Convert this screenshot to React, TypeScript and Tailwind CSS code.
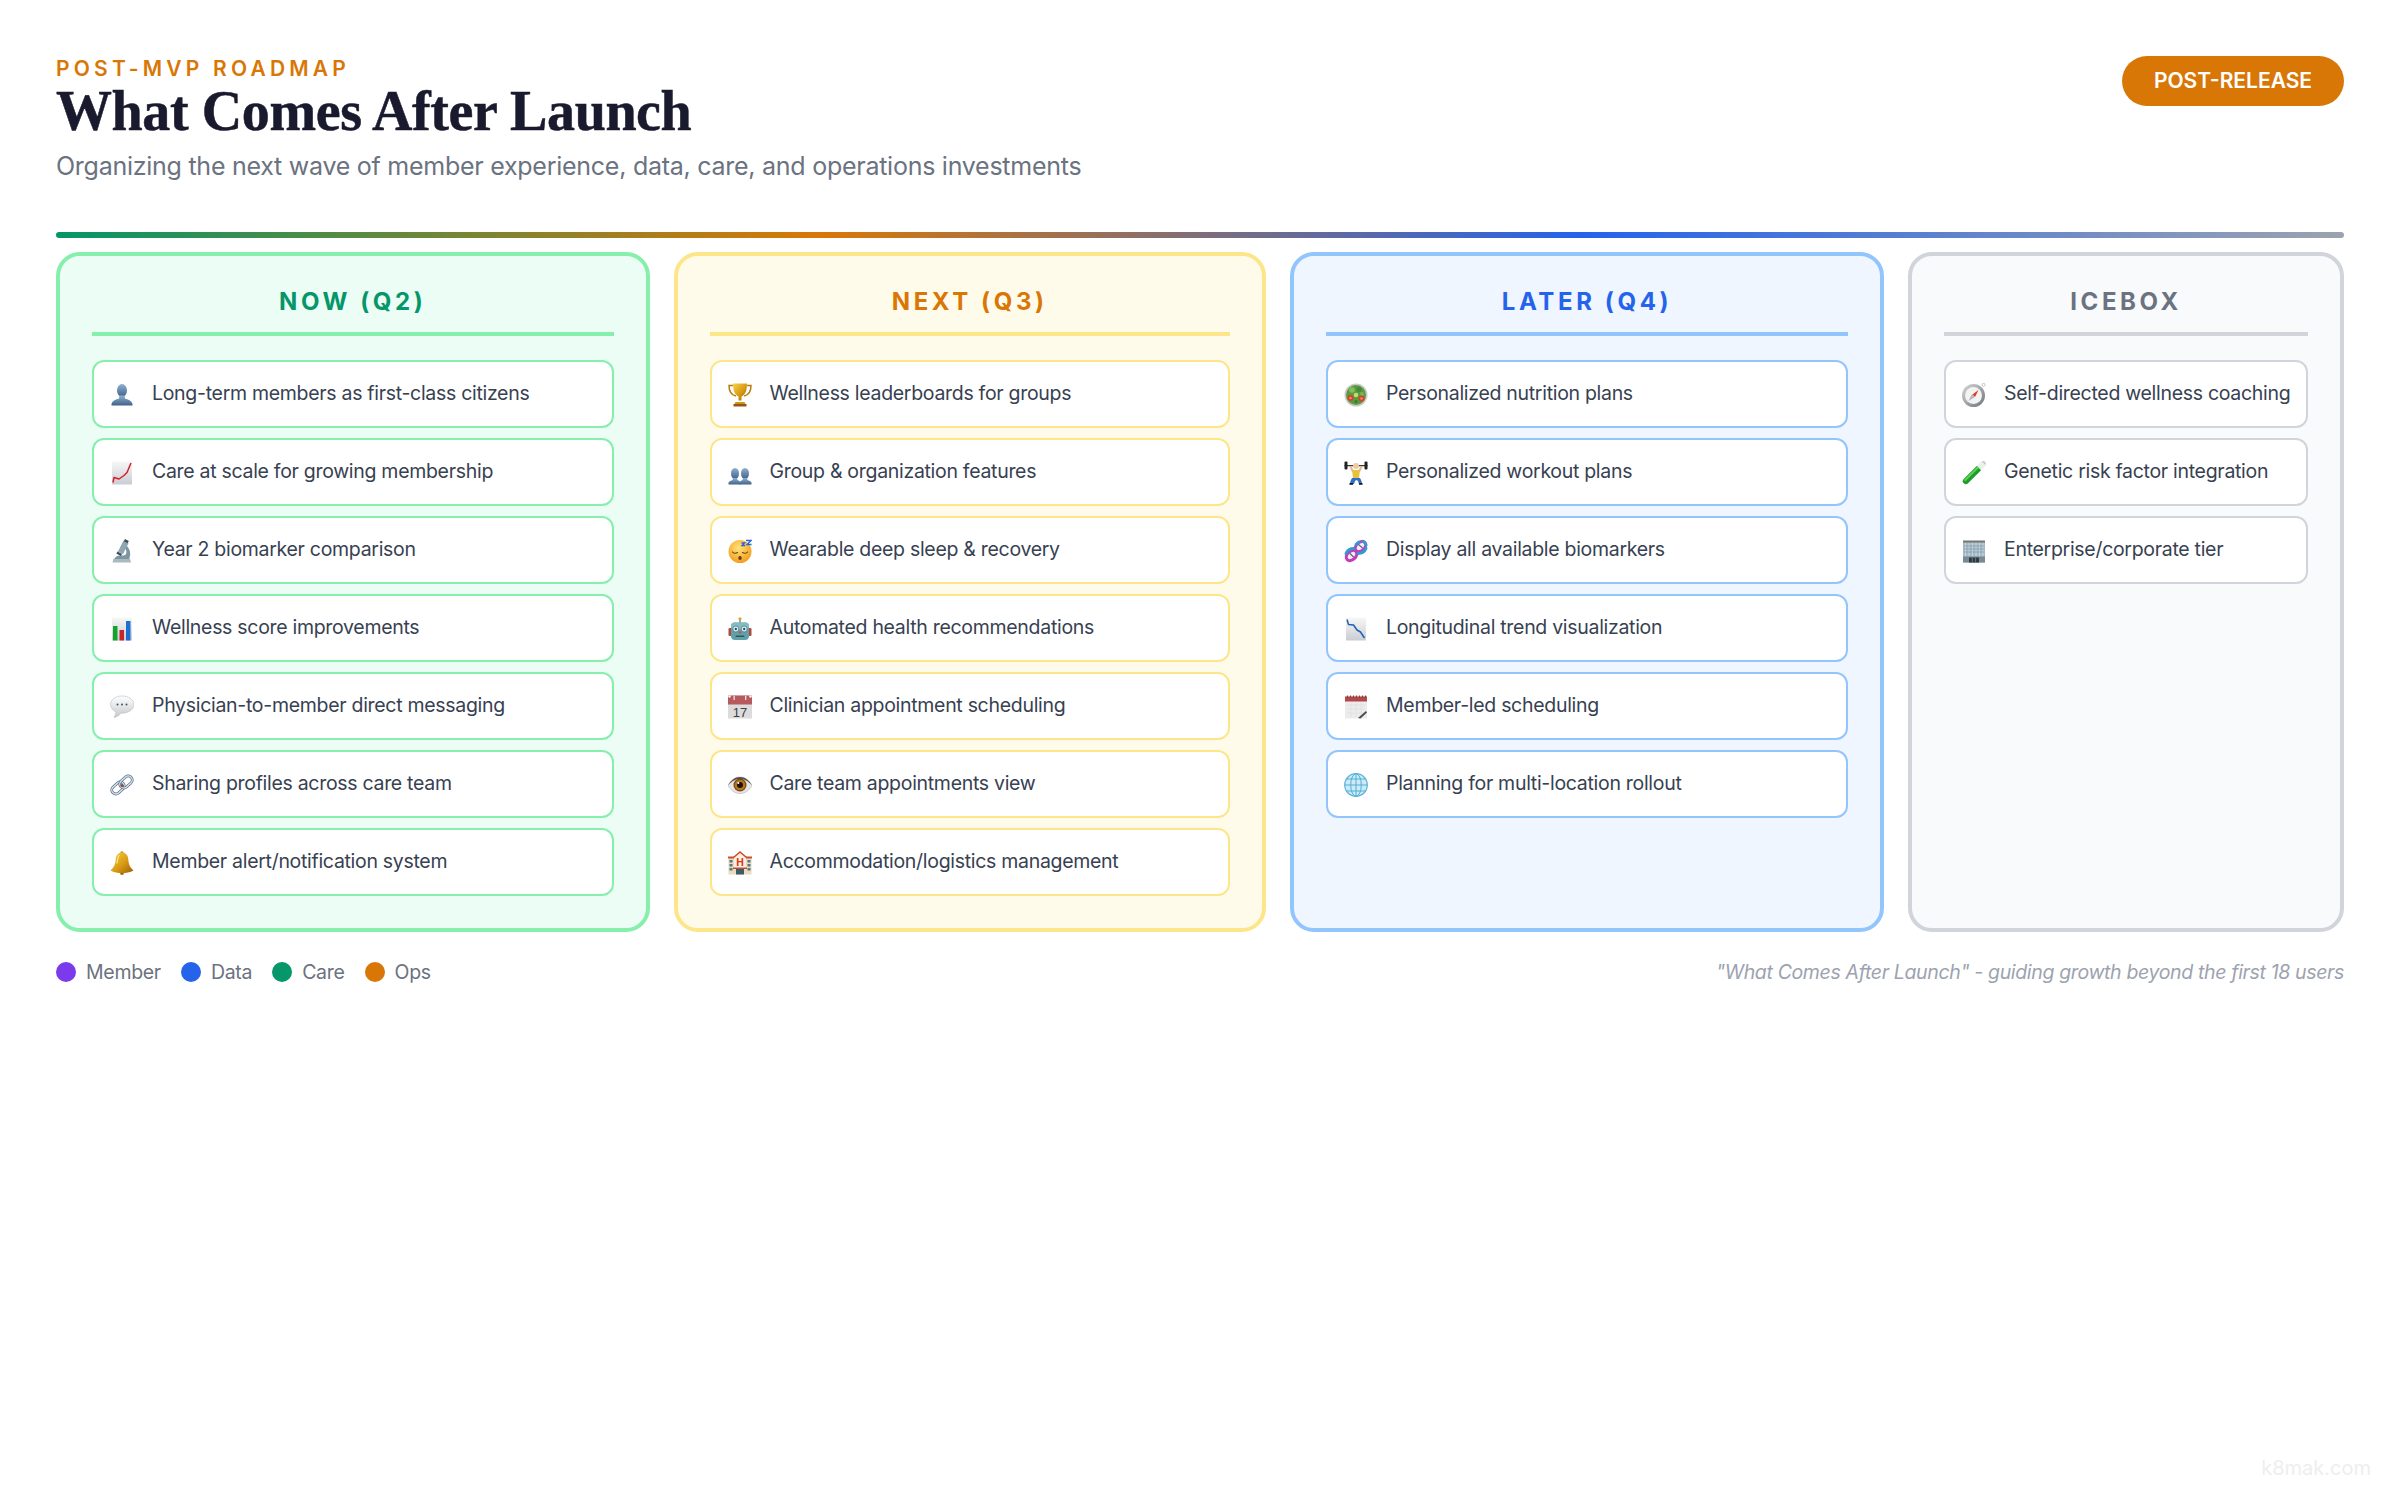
import type { ReactNode } from "react";

// Apple-style emoji drawn by hand, 24x24 box
function Icon({ children }: { children: ReactNode }) {
  return (
    <svg viewBox="0 0 24 24" className="mt-0.5 h-6 w-6 shrink-0" aria-hidden="true">
      {children}
    </svg>
  );
}

function Defs() {
  return (
    <svg className="absolute h-0 w-0" aria-hidden="true">
      <defs>
        <linearGradient id="bust" x1="0" y1="0" x2="0" y2="1">
          <stop offset="0" stopColor="#8fb0d2" />
          <stop offset="1" stopColor="#3f6288" />
        </linearGradient>
        <linearGradient id="paper" x1="0" y1="0" x2="0" y2="1">
          <stop offset="0" stopColor="#f7f7f7" />
          <stop offset="1" stopColor="#c9cdd2" />
        </linearGradient>
        <linearGradient id="gold" x1="0" y1="0" x2="1" y2="1">
          <stop offset="0" stopColor="#f6d34a" />
          <stop offset="0.55" stopColor="#d99a12" />
          <stop offset="1" stopColor="#9c5f08" />
        </linearGradient>
        <linearGradient id="rim" x1="0" y1="0" x2="1" y2="1">
          <stop offset="0" stopColor="#d6d8da" />
          <stop offset="1" stopColor="#70757a" />
        </linearGradient>
        <radialGradient id="face" cx="0.45" cy="0.35" r="0.75">
          <stop offset="0" stopColor="#ffe37a" />
          <stop offset="1" stopColor="#f2930f" />
        </radialGradient>
        <linearGradient id="bubble" x1="0" y1="0" x2="0" y2="1">
          <stop offset="0" stopColor="#ffffff" />
          <stop offset="1" stopColor="#c4c9cd" />
        </linearGradient>
      </defs>
    </svg>
  );
}

const icons: Record<string, ReactNode> = {
  bust: (
    <>
      <ellipse cx="12" cy="7.5" rx="5" ry="6.5" fill="url(#bust)" />
      <path d="M9.5 12.5h5l.5 3c3 1 6.5 2 7.5 5.5v1.5h-21V21c1-3.500 4.500-4.500 7.500-5.500z" fill="url(#bust)" />
    </>
  ),
  chartUp: (
    <>
      <rect x="2" y="0.500" width="20" height="23" fill="url(#paper)" />
      <path d="M3 21.500l1-5 5 1.500 5-3.500 3-3L21 2" fill="none" stroke="#d4202a" strokeWidth="1.500" strokeLinejoin="round" />
    </>
  ),
  microscope: (
    <>
      <path d="M3.500 19.500h16.500l1 4H2.500z" fill="#a9b9c0" />
      <path d="M4.500 20c1.500-4 6-3.500 9-3.500 2.500 0 3.500-3 2.500-5.500l-1.500-3 2-1.500c3.500 3.500 5 8.500 2.500 13.500z" fill="#7d95a2" />
      <path d="M13.500 1.500l5 2.700-5.500 11-5-2.700z" fill="#8da6b2" />
      <path d="M15 0l3.800 2-1.200 2.300-3.800-2z" fill="#3f4f59" />
      <path d="M7.500 12.500l4.500 2.500-1.200 2-4.500-2.500z" fill="#3f4f59" />
    </>
  ),
  bars: (
    <>
      <rect x="2" y="0.500" width="20" height="23" fill="url(#paper)" />
      <rect x="3" y="9" width="4.500" height="14.500" fill="#12a52e" />
      <rect x="9.500" y="13" width="4.500" height="10.500" fill="#c8242c" />
      <rect x="16" y="4" width="4.500" height="19.500" fill="#1f6fd0" />
    </>
  ),
  speech: (
    <>
      <path d="M12 1C5.500 1 0.500 4.700 0.500 9.500c0 3.300 2.200 6 5.500 7.400-.2 2-1 3.800-2 5.600 2.800-.7 5.200-2.200 7-4.300h1c6.500 0 12-3.900 12-8.700S18.500 1 12 1z" fill="url(#bubble)" stroke="#b9bec2" strokeWidth="0.600" />
      <circle cx="7.500" cy="9.500" r="1" fill="#4c5155" />
      <circle cx="12" cy="9.500" r="1" fill="#4c5155" />
      <circle cx="16.500" cy="9.500" r="1" fill="#4c5155" />
    </>
  ),
  link: (
    <g fill="none" strokeLinecap="round">
      <rect x="1" y="11" width="14" height="8" rx="4" transform="rotate(-42 8 15)" stroke="#566f8a" strokeWidth="2.800" />
      <rect x="1" y="11" width="14" height="8" rx="4" transform="rotate(-42 8 15)" stroke="#dfe7ee" strokeWidth="1.300" />
      <rect x="9" y="5" width="14" height="8" rx="4" transform="rotate(-42 16 9)" stroke="#566f8a" strokeWidth="2.800" />
      <rect x="9" y="5" width="14" height="8" rx="4" transform="rotate(-42 16 9)" stroke="#dfe7ee" strokeWidth="1.300" />
      <circle cx="12" cy="12.500" r="1.600" fill="#8b4a3c" />
    </g>
  ),
  bell: (
    <>
      <circle cx="12" cy="22" r="2" fill="#a5690c" />
      <circle cx="12" cy="2" r="1.700" fill="#c58a12" />
      <path d="M12 1.500c-4 0-6 3-6.300 7-.3 4.500-1.500 7.500-5.200 11 3 2 8 2.500 11.500 2.500s8.500-.5 11.500-2.500c-3.700-3.500-4.900-6.500-5.200-11-.3-4-2.300-7-6.300-7z" fill="url(#gold)" />
      <path d="M9 4.500c-1.500 2-1.500 5-2 7.500" stroke="#fbe98f" strokeWidth="1.200" fill="none" strokeLinecap="round" />
    </>
  ),
  trophy: (
    <>
      <path d="M5 2.500H1c0 6 2 9.500 7 10.500M19 2.500h4c0 6-2 9.500-7 10.500" fill="none" stroke="#b87c10" strokeWidth="1.500" />
      <path d="M5 0.500h14c0 7-1.500 11-5.500 13v4h-3v-4C6.500 11.500 5 7.500 5 0.500z" fill="url(#gold)" />
      <path d="M7.500 19h9l1 2h-11z" fill="#cf9318" />
      <rect x="5.500" y="21" width="13" height="2.500" fill="#96541a" />
    </>
  ),
  busts: (
    <>
      <ellipse cx="7" cy="12.500" rx="4" ry="5.500" fill="url(#bust)" />
      <path d="M5 17h4l.5 2c1.500.5 2.500 1.500 3 2.500v2H.500v-2c.5-1 2.500-2 4-2.500z" fill="url(#bust)" />
      <ellipse cx="17" cy="12.500" rx="4" ry="5.500" fill="url(#bust)" />
      <path d="M15 17h4l.5 2c1.500.5 3.500 1.500 4 2.500v2H11.500v-2c.5-1 1.500-2 3-2.500z" fill="url(#bust)" />
    </>
  ),
  sleep: (
    <>
      <circle cx="12" cy="12.500" r="11.500" fill="url(#face)" />
      <path d="M4.500 13c1 1.500 3.500 1.500 5 .5M14.500 13.500c1.500 1 4 1 5-.5" stroke="#6d3f10" strokeWidth="1.100" fill="none" strokeLinecap="round" />
      <ellipse cx="12" cy="19" rx="1.700" ry="1.900" fill="#6d3a12" />
      <path d="M18 1.500h5l-4 4h4.500M13.500 4h3l-2.500 2.500h3" fill="none" stroke="#2a63d8" strokeWidth="1.300" />
    </>
  ),
  robot: (
    <>
      <circle cx="12" cy="1.800" r="1.600" fill="#e2a032" />
      <rect x="11.200" y="3" width="1.600" height="3" fill="#8b979c" />
      <rect x="0.500" y="11" width="3.500" height="8" rx="1" fill="#b4483c" />
      <rect x="20" y="11" width="3.500" height="8" rx="1" fill="#b4483c" />
      <rect x="3" y="5.500" width="18" height="17.500" rx="4" fill="#5ea1ab" />
      <rect x="3" y="5.500" width="18" height="7" rx="3.500" fill="#85bcc4" />
      <circle cx="7.800" cy="12" r="3" fill="#dff1f4" stroke="#3c6f78" strokeWidth="0.700" />
      <circle cx="16.200" cy="12" r="3" fill="#dff1f4" stroke="#3c6f78" strokeWidth="0.700" />
      <circle cx="7.800" cy="12" r="1.200" fill="#2d5560" />
      <circle cx="16.200" cy="12" r="1.200" fill="#2d5560" />
      <rect x="10.500" y="14.500" width="3" height="2" rx="1" fill="#d34d45" />
      <rect x="7.500" y="18.500" width="9" height="1.600" rx="0.800" fill="#31565e" />
    </>
  ),
  calendar: (
    <>
      <rect y="0.500" width="24" height="23" fill="#dcdcdc" />
      <rect y="0.500" width="24" height="9" fill="#b75a5e" />
      <circle cx="1.500" cy="1.500" r="1.200" fill="#ffffff" />
      <circle cx="22.500" cy="1.500" r="1.200" fill="#ffffff" />
      <rect x="17" y="1" width="1.300" height="4" fill="#f5e0e0" />
      <rect x="5.500" y="1" width="1.300" height="4" fill="#f5e0e0" />
      <text x="12" y="21.500" textAnchor="middle" fontSize="13" fontFamily="'Liberation Sans',sans-serif" fill="#3c3f42">17</text>
    </>
  ),
  eye: (
    <>
      <path d="M0 12.500C3 7 7 4 12 4s9 3 12 8.500c-3 5-7 8-12 8s-9-3-12-8z" fill="#e5e5e5" stroke="#a4a4a4" strokeWidth="0.500" />
      <path d="M0 12.500C3 7 7 4 12 4s9 3 12 8.500C20 7.500 16 6 12 6s-8 1.500-12 6.500z" fill="#55504a" />
      <circle cx="12" cy="12" r="6.500" fill="#7a4413" />
      <circle cx="12" cy="12" r="5.300" fill="#b5761c" />
      <circle cx="12" cy="12" r="3" fill="#1c120b" />
      <circle cx="10.300" cy="10" r="1" fill="#ffffff" />
    </>
  ),
  hospital: (
    <>
      <rect x="0.500" y="7" width="23" height="16.500" fill="#eadbc0" />
      <rect x="0" y="5.500" width="24" height="2" fill="#c9512c" />
      <path d="M6 6l6-5 6 5v12H6z" fill="#fbf1df" />
      <path d="M5.500 6.500L12 1l6.500 5.500" fill="none" stroke="#d0482a" strokeWidth="1.500" />
      <text x="12" y="14.500" textAnchor="middle" fontSize="10.500" fontWeight="700" fontFamily="'Liberation Sans',sans-serif" fill="#dc3318">H</text>
      <g fill="#547885">
        <rect x="1.500" y="9" width="3" height="2.500" />
        <rect x="19.500" y="9" width="3" height="2.500" />
        <rect x="1.500" y="13" width="3" height="2.500" />
        <rect x="19.500" y="13" width="3" height="2.500" />
        <rect x="1.500" y="17" width="3" height="2.500" />
        <rect x="19.500" y="17" width="3" height="2.500" />
      </g>
      <rect x="5" y="16.500" width="14" height="1.500" fill="#d0482a" />
      <rect x="8" y="18" width="8" height="5.500" fill="#3a5c66" />
    </>
  ),
  salad: (
    <>
      <circle cx="12" cy="12" r="11.500" fill="#c9ccc6" />
      <circle cx="12" cy="12" r="10" fill="#5a9a42" />
      <circle cx="8" cy="7" r="2.800" fill="#86bd58" />
      <circle cx="15" cy="6.500" r="2.500" fill="#47873a" />
      <circle cx="12" cy="12" r="2.300" fill="#c3dc68" />
      <circle cx="18" cy="11" r="2" fill="#7db44e" />
      <circle cx="6.500" cy="15" r="3" fill="#d5432f" />
      <circle cx="17.500" cy="15.500" r="3" fill="#d5432f" />
      <circle cx="6.500" cy="15" r="1.200" fill="#ef8d6e" />
      <circle cx="17.500" cy="15.500" r="1.200" fill="#ef8d6e" />
      <circle cx="12" cy="18.500" r="1.600" fill="#3a7a33" />
    </>
  ),
  lifter: (
    <>
      <rect x="0.500" y="4" width="23" height="1.300" fill="#3a3a3a" />
      <rect x="0.500" y="0.500" width="3" height="8" rx="1" fill="#222222" />
      <rect x="20.500" y="0.500" width="3" height="8" rx="1" fill="#222222" />
      <path d="M5 5l3 6h8l3-6h-2l-2.500 4h-5L7 5z" fill="#e6b98e" />
      <circle cx="12" cy="5" r="3" fill="#f0c99f" />
      <path d="M8 9h8l-1 8H9z" fill="#e8c23b" />
      <path d="M8 17h8l1.500 3 .5 3h-3l-1-3-1.500-1-1.500 1-1 3H6l.5-3z" fill="#2f6fc4" />
      <rect x="5.500" y="22" width="3.500" height="1.800" fill="#1c1c1c" />
      <rect x="15" y="22" width="3.500" height="1.800" fill="#1c1c1c" />
    </>
  ),
  dna: (
    <g fill="none" strokeLinecap="round">
      {/* two lobes of the helix along the diagonal */}
      <ellipse cx="7.500" cy="16.500" rx="6" ry="4.300" transform="rotate(-42 7.500 16.500)" fill="#f4ecf6" stroke="#c43db8" strokeWidth="3" />
      <ellipse cx="16.500" cy="7.500" rx="6" ry="4.300" transform="rotate(-42 16.500 7.500)" fill="#f4ecf6" stroke="#c43db8" strokeWidth="3" />
      <path d="M2 14.500C3.500 11 7 9.500 10 9.500M14 14.500c3 0 6.500-1.500 8-5" stroke="#2f9bd4" strokeWidth="3" />
      <path d="M15 3c-1 .5-2 1.500-3 2.500M18.500 2.500c2 .5 3.500 2 3.500 4" stroke="#2f9bd4" strokeWidth="2.600" />
      <path d="M6 14.500l3.500 3.500M14.500 5.500l4 3.500" stroke="#5f6a80" strokeWidth="1.200" />
    </g>
  ),
  chartDown: (
    <>
      <rect x="2" y="0.500" width="20" height="23" fill="url(#paper)" />
      <path d="M3 2.500l1.500 5 5 .5 3.500 5 3.500 2 4 6" fill="none" stroke="#1f5fb5" strokeWidth="1.500" strokeLinejoin="round" />
    </>
  ),
  notepad: (
    <>
      <rect x="1" y="0.500" width="22" height="23" fill="#ececec" />
      <rect x="1" y="1.500" width="22" height="5" fill="#b3474b" />
      <g fill="#6d2c2f">
        <rect x="3" y="0.500" width="0.800" height="2" />
        <rect x="6" y="0.500" width="0.800" height="2" />
        <rect x="9" y="0.500" width="0.800" height="2" />
        <rect x="12" y="0.500" width="0.800" height="2" />
        <rect x="15" y="0.500" width="0.800" height="2" />
        <rect x="18" y="0.500" width="0.800" height="2" />
        <rect x="21" y="0.500" width="0.800" height="2" />
      </g>
      <path d="M3 10h18M3 14h18M3 18h18M7 8v14M12 8v14M17 8v14" stroke="#dadada" strokeWidth="0.500" />
      <path d="M14 23l8-7 1 1.500-6.500 6z" fill="#4a4a4a" />
    </>
  ),
  globe: (
    <>
      <circle cx="12" cy="12" r="11.300" fill="#cfeaf6" stroke="#5cb5da" strokeWidth="1.200" />
      <g fill="none" stroke="#4fafd6" strokeWidth="1">
        <ellipse cx="12" cy="12" rx="5.300" ry="11.300" />
        <path d="M12 0.700v22.600M0.700 12h22.600M2.500 6h19M2.500 18h19" />
      </g>
    </>
  ),
  compass: (
    <>
      <circle cx="21.500" cy="1.800" r="1.500" fill="none" stroke="#b6b6b6" strokeWidth="0.800" />
      <circle cx="11.500" cy="12.500" r="11.500" fill="url(#rim)" />
      <circle cx="11.500" cy="12.500" r="8.500" fill="#f3f3f1" />
      <path d="M16.500 7l-3.500 7-2.500-2.500z" fill="#e0342c" />
      <path d="M6.500 18l3.500-7 3 3z" fill="#b3b7ba" />
    </>
  ),
  tube: (
    <g transform="rotate(45 12 12)">
      <rect x="9" y="-3.500" width="6" height="30" rx="3" fill="#e8f0e8" />
      <path d="M9 5h6v18.500a3 3 0 0 1-6 0z" fill="#1f9d2c" />
      <rect x="9.800" y="5" width="2" height="19" fill="#5dd352" />
      <rect x="8.300" y="-3.500" width="7.400" height="1.600" fill="#c3ccc3" />
    </g>
  ),
  office: (
    <>
      <rect x="1" y="3" width="22" height="20.500" fill="#a4bac7" />
      <rect x="1" y="1.500" width="22" height="2" fill="#77766f" />
      <path d="M3.500 4v13M7 4v13M10.500 4v13M14 4v13M17.500 4v13M21 4v13" stroke="#c9d8e0" strokeWidth="1" />
      <path d="M2 7h20M2 10h20M2 13h20" stroke="#7a92a0" strokeWidth="0.600" />
      <rect x="1" y="17.500" width="22" height="6" fill="#7b8a92" />
      <rect x="7" y="18.500" width="10" height="5" fill="#2c3a42" />
      <path d="M10.300 18.500v5M13.600 18.500v5" stroke="#7f8f98" strokeWidth="0.700" />
    </>
  ),
};

const columns = [
  {
    title: "NOW (Q2)",
    box: "bg-[#ecfdf5] border-[#86efac]",
    heading: "text-[#059669] border-[#86efac]",
    item: "border-[#86efac]",
    items: [
      ["bust", "Long-term members as first-class citizens"],
      ["chartUp", "Care at scale for growing membership"],
      ["microscope", "Year 2 biomarker comparison"],
      ["bars", "Wellness score improvements"],
      ["speech", "Physician-to-member direct messaging"],
      ["link", "Sharing profiles across care team"],
      ["bell", "Member alert/notification system"],
    ],
  },
  {
    title: "NEXT (Q3)",
    box: "bg-[#fffbeb] border-[#fde68a]",
    heading: "text-[#d97706] border-[#fde68a]",
    item: "border-[#fde68a]",
    items: [
      ["trophy", "Wellness leaderboards for groups"],
      ["busts", "Group & organization features"],
      ["sleep", "Wearable deep sleep & recovery"],
      ["robot", "Automated health recommendations"],
      ["calendar", "Clinician appointment scheduling"],
      ["eye", "Care team appointments view"],
      ["hospital", "Accommodation/logistics management"],
    ],
  },
  {
    title: "LATER (Q4)",
    box: "bg-[#eff6ff] border-[#93c5fd]",
    heading: "text-[#2563eb] border-[#93c5fd]",
    item: "border-[#93c5fd]",
    items: [
      ["salad", "Personalized nutrition plans"],
      ["lifter", "Personalized workout plans"],
      ["dna", "Display all available biomarkers"],
      ["chartDown", "Longitudinal trend visualization"],
      ["notepad", "Member-led scheduling"],
      ["globe", "Planning for multi-location rollout"],
    ],
  },
  {
    title: "ICEBOX",
    box: "bg-[#f9fafb] border-[#d1d5db]",
    heading: "text-[#6b7280] border-[#d1d5db]",
    item: "border-[#d1d5db]",
    items: [
      ["compass", "Self-directed wellness coaching"],
      ["tube", "Genetic risk factor integration"],
      ["office", "Enterprise/corporate tier"],
    ],
  },
];

const legend = [
  { name: "Member", dot: "bg-[#7c3aed]" },
  { name: "Data", dot: "bg-[#2563eb]" },
  { name: "Care", dot: "bg-[#059669]" },
  { name: "Ops", dot: "bg-[#d97706]" },
];

export default function App() {
  return (
    <div className="relative min-h-screen bg-white px-14 pt-14 font-['Inter',sans-serif]">
      <Defs />

      {/* Header */}
      <div className="flex items-start justify-between">
        <div>
          <div className="text-[21px] leading-[25px] font-semibold tracking-[4.2px] text-[#d97706]">
            POST-MVP ROADMAP
          </div>
          <h1 className="text-[56px] leading-[60px] font-bold tracking-[-0.4px] text-[#1a1a2e] font-['Liberation_Serif',serif] [-webkit-text-stroke:0.5px_#1a1a2e]">
            What Comes After Launch
          </h1>
          <p className="mt-[7px] text-[25px] leading-[36px] tracking-[-0.26px] text-[#6b7280]">
            Organizing the next wave of member experience, data, care, and operations investments
          </p>
        </div>
        <div className="flex h-[50px] w-[222px] items-center justify-center rounded-full bg-[#d97706] text-[21px] font-semibold text-white">
          POST-RELEASE
        </div>
      </div>

      {/* Gradient bar */}
      <div className="mt-12 h-1.5 rounded-full bg-[linear-gradient(90deg,#059669,#d97706,#2563eb,#9ca3af)]" />

      {/* Columns */}
      <div className="mt-3.5 grid grid-cols-[593.5px_592.5px_594px_436px] gap-6">
        {columns.map((col) => (
          <div key={col.title} className={`h-[680px] rounded-3xl border-4 px-8 pt-[30px] ${col.box}`}>
            <div className={`border-b-4 pb-3.5 text-center text-[24px] leading-[32px] font-bold tracking-[3.6px] ${col.heading}`}>
              {col.title}
            </div>
            <div className="mt-6 flex flex-col gap-2.5">
              {col.items.map(([icon, label]) => (
                <div key={label} className={`flex h-[68px] items-center gap-[18px] rounded-xl border-2 bg-white px-4 ${col.item}`}>
                  <Icon>{icons[icon]}</Icon>
                  <span className="text-[19.5px] tracking-[-0.3px] whitespace-nowrap text-[#374151]">{label}</span>
                </div>
              ))}
            </div>
          </div>
        ))}
      </div>

      {/* Legend */}
      <div className="mt-[26px] flex items-center justify-between">
        <div className="flex items-center gap-5">
          {legend.map((l) => (
            <div key={l.name} className="flex items-center gap-2.5">
              <span className={`h-5 w-5 rounded-full ${l.dot}`} />
              <span className="text-[19.5px] leading-[28px] tracking-[-0.3px] text-[#6b7280]">{l.name}</span>
            </div>
          ))}
        </div>
        <div className="text-[19.5px] leading-[28px] tracking-[-0.35px] text-[#9ca3af] italic">
          "What Comes After Launch" - guiding growth beyond the first 18 users
        </div>
      </div>

      <div className="absolute top-[1456px] right-[29px] text-[20px] leading-[24px] text-[#eeeeee]">
        k8mak.com
      </div>
    </div>
  );
}
